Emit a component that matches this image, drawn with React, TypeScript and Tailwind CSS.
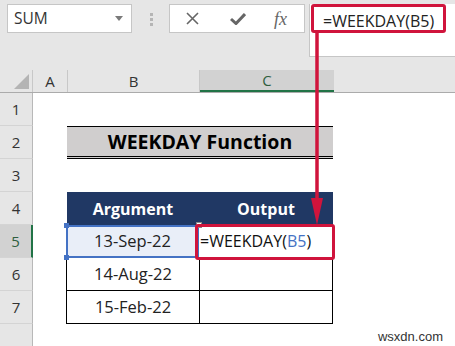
import React from "react";

const RED = "#d0143c";

function RowHeader({ n, active }: { n: number; active?: boolean }) {
  return (
    <div
      className={
        "w-[33px] h-[33px] shrink-0 flex items-center justify-center text-[15px] border-b border-[#d4d4d4] " +
        (active
          ? "bg-[#d2d2d2] border-r-2 border-r-[#217346] text-[#2f5f3f]"
          : "bg-[#e6e6e6] border-r border-r-[#b8b8b8] text-[#333]")
      }
    >
      {n}
    </div>
  );
}

export default function App() {
  return (
    <div
      className="relative w-[455px] h-[346px] overflow-hidden bg-white"
      style={{ fontFamily: "'Open Sans', 'Noto Sans', sans-serif" }}
    >
      {/* Top toolbar */}
      <div className="h-[70px] bg-[#e6e6e6] flex items-start pt-[4px]">
        <div className="ml-[7px] w-[125px] h-[29px] bg-white border border-[#c6c6c6] flex items-center justify-between pl-[6px] pr-[8px]">
          <span className="text-[15.5px] text-[#333]">SUM</span>
          <svg width="8" height="5" viewBox="0 0 8 5">
            <path d="M0 0 L8 0 L4 5 Z" fill="#7a7a7a" />
          </svg>
        </div>
        <div className="ml-[18px] mt-[9px] flex flex-col gap-[2px]">
          <div className="w-[3px] h-[3px] bg-[#b5b5b5]" />
          <div className="w-[3px] h-[3px] bg-[#b5b5b5]" />
          <div className="w-[3px] h-[3px] bg-[#b5b5b5]" />
        </div>
        <div className="ml-[16px] w-[136px] h-[29px] bg-white border border-[#c6c6c6] flex items-center">
          <svg className="ml-[16px]" width="13" height="13" viewBox="0 0 13 13">
            <path d="M1 1 L12 12 M12 1 L1 12" stroke="#666" strokeWidth="1.6" />
          </svg>
          <svg className="ml-[31px]" width="16" height="12" viewBox="0 0 16 12">
            <path d="M1 6 L6 10.5 L15 1" stroke="#666" strokeWidth="3" fill="none" />
          </svg>
          <span
            className="ml-[28px] text-[18px] italic text-[#666] leading-none"
            style={{ fontFamily: "'Liberation Serif', serif" }}
          >
            fx
          </span>
        </div>
        <div className="ml-[4px] flex-1 h-[53px] bg-white border-l border-b border-[#c6c6c6] flex items-start">
          <span className="mt-[5px] ml-[13px] text-[16px] text-[#222]">=WEEKDAY(B5)</span>
        </div>
      </div>

      {/* Column header row */}
      <div className="h-[23px] bg-[#e6e6e6] flex border-b border-[#ababab]">
        <div className="w-[33px] shrink-0 border-r border-[#c8c8c8] flex items-end justify-end pr-[3px] pb-[3px]">
          <svg width="15" height="15" viewBox="0 0 15 15">
            <path d="M15 0 L15 15 L0 15 Z" fill="#b4b4b4" />
          </svg>
        </div>
        <div className="w-[35px] shrink-0 border-r border-[#c8c8c8] flex items-center justify-center text-[15px] text-[#333]">
          A
        </div>
        <div className="w-[132px] shrink-0 border-r border-[#c8c8c8] flex items-center justify-center text-[15px] text-[#333]">
          B
        </div>
        <div className="w-[134px] shrink-0 bg-[#d2d2d2] border-b-2 border-[#217346] flex items-center justify-center text-[15px] text-[#2f5f3f]">
          C
        </div>
        <div className="flex-1" />
      </div>

      {/* Rows */}
      <div className="flex flex-col">
        {/* Row 1 */}
        <div className="flex">
          <RowHeader n={1} />
        </div>
        {/* Row 2 */}
        <div className="flex">
          <RowHeader n={2} />
          <div className="w-[34px] shrink-0" />
          <div className="w-[266px] h-[33px] shrink-0 bg-[#d0cece] border-t border-black border-b-[3px] border-b-black border-double flex items-center justify-center">
            <span className="text-[19.5px] font-bold text-black">WEEKDAY Function</span>
          </div>
        </div>
        {/* Row 3 */}
        <div className="flex">
          <RowHeader n={3} />
        </div>
        {/* Row 4 */}
        <div className="flex">
          <RowHeader n={4} />
          <div className="w-[34px] shrink-0" />
          <div className="w-[132px] h-[33px] shrink-0 bg-[#203864] flex items-center justify-center">
            <span className="text-[16px] font-bold text-white">Argument</span>
          </div>
          <div className="w-[134px] h-[33px] shrink-0 bg-[#203864] flex items-center justify-center">
            <span className="text-[16px] font-bold text-white">Output</span>
          </div>
        </div>
        {/* Row 5 */}
        <div className="flex">
          <RowHeader n={5} active />
          <div className="w-[33px] shrink-0" />
          <div className="relative w-[133px] h-[33px] shrink-0 bg-[#e9eef8] flex items-center justify-center">
            <span className="text-[16.5px] text-[#222]">13-Sep-22</span>
            <div className="absolute inset-0 border-2 border-[#4472c4]" />
            <div className="absolute left-[-2px] top-[-2px] w-[5px] h-[5px] bg-[#4472c4]" />
            <div className="absolute left-[-2px] bottom-[-2px] w-[5px] h-[5px] bg-[#4472c4]" />
            <div className="absolute right-[-3px] top-[-3px] w-[6px] h-[6px] bg-white border border-[#888]" />
          </div>
          <div className="w-[134px] h-[33px] shrink-0 border-r border-b border-black flex items-center">
            <span className="ml-[1px] text-[16px] text-[#111]">
              =WEEKDAY(<span className="text-[#4472c4]">B5</span>)
            </span>
          </div>
        </div>
        {/* Row 6 */}
        <div className="flex">
          <RowHeader n={6} />
          <div className="w-[33px] shrink-0" />
          <div className="w-[133px] h-[33px] shrink-0 border-l border-b border-black flex items-center justify-center">
            <span className="text-[16.5px] text-[#222]">14-Aug-22</span>
          </div>
          <div className="w-[134px] h-[33px] shrink-0 border-l border-r border-b border-black" />
        </div>
        {/* Row 7 */}
        <div className="flex">
          <RowHeader n={7} />
          <div className="w-[33px] shrink-0" />
          <div className="w-[133px] h-[33px] shrink-0 border-l border-b border-black flex items-center justify-center">
            <span className="text-[16.5px] text-[#222]">15-Feb-22</span>
          </div>
          <div className="w-[134px] h-[33px] shrink-0 border-l border-r border-b border-black" />
        </div>
        {/* Row 8 */}
        <div className="flex">
          <div className="w-[33px] h-[33px] shrink-0 bg-[#e6e6e6] border-r border-[#b8b8b8]" />
          <div className="flex-1 flex items-start justify-end pr-[12px] pt-[6px]">
            <span
              className="text-[13px] text-[#333] leading-none"
              style={{ fontFamily: "'Liberation Sans', sans-serif" }}
            >
              wsxdn.com
            </span>
          </div>
        </div>
      </div>

      {/* Overlays: red highlight boxes and arrow */}
      <div
        className="absolute left-[311px] top-[4px] w-[135px] h-[29px] border-[3px] rounded-[3px]"
        style={{ borderColor: RED }}
      />
      <div
        className="absolute left-[195px] top-[224px] w-[140px] h-[36px] border-[3px] rounded-[3px]"
        style={{ borderColor: RED }}
      />
      <svg className="absolute left-[309px] top-[32px]" width="16" height="194" viewBox="0 0 16 194">
        <path d="M8 0 L8 172" stroke={RED} strokeWidth="3.5" />
        <path d="M2 166 L14 166 L8 193 Z" fill={RED} />
      </svg>
    </div>
  );
}
